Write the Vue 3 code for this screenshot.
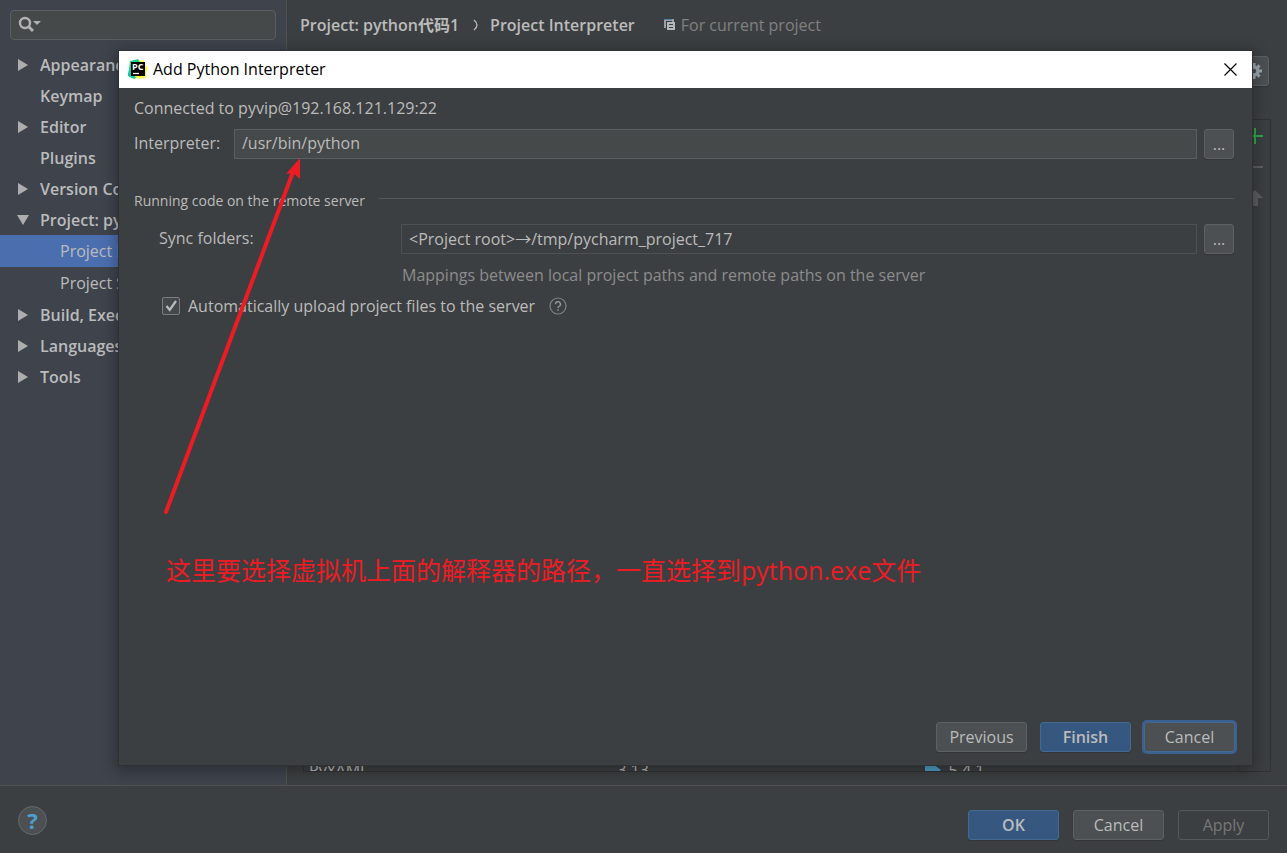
<script setup>
import { ref } from 'vue'

const search = ref('')
const interpreter = ref('/usr/bin/python')
const syncFolders = ref('<Project root>→/tmp/pycharm_project_717')
const autoUpload = ref(true)

const nav = [
  { label: 'Appearance & Behavior', arrow: 'right' },
  { label: 'Keymap' },
  { label: 'Editor', arrow: 'right' },
  { label: 'Plugins' },
  { label: 'Version Control', arrow: 'right' },
  { label: 'Project: python代码1', arrow: 'down' },
  { label: 'Project Interpreter', child: true, selected: true },
  { label: 'Project Structure', child: true },
  { label: 'Build, Execution, Deployment', arrow: 'right' },
  { label: 'Languages & Frameworks', arrow: 'right' },
  { label: 'Tools', arrow: 'right' },
]
</script>

<template>
  <div class="window">
    <div class="main">
      <aside class="sidebar">
        <label class="search">
          <svg width="24" height="18" viewBox="0 0 24 18" aria-hidden="true">
            <circle cx="7" cy="7" r="5" fill="none" stroke="#afb1b3" stroke-width="2.4" />
            <path d="M10.5 10.5L15 15" stroke="#afb1b3" stroke-width="3" />
            <path d="M15 5h8l-4 4z" fill="#afb1b3" />
          </svg>
          <input v-model="search" type="text" aria-label="Search settings" />
        </label>
        <nav>
          <a
            v-for="item in nav"
            :key="item.label"
            href="#"
            class="nav-item"
            :class="{ child: item.child, selected: item.selected }"
          >
            <svg class="arrow" width="12" height="12" viewBox="0 0 12 12" aria-hidden="true">
              <path v-if="item.arrow === 'right'" d="M1 0l10 6-10 6z" fill="#adadad" />
              <path v-if="item.arrow === 'down'" d="M0 1h12l-6 10z" fill="#adadad" />
            </svg>
            <span>{{ item.label }}</span>
          </a>
        </nav>
      </aside>

      <section class="content">
        <header class="crumbs">
          <b>Project: python代码1</b>
          <svg class="chevron" width="6" height="12" viewBox="0 0 6 12" aria-hidden="true">
            <path d="M1 1q3 2.5 3 5t-3 5" fill="none" stroke="#bbb" stroke-width="1.3" />
          </svg>
          <b>Project Interpreter</b>
          <span class="scope">
            <svg width="12" height="12" viewBox="0 0 12 12" aria-hidden="true">
              <path d="M1 9V1h8v2" fill="none" stroke="#9aa0a4" stroke-width="2" />
              <path d="M0 .5h8" stroke="#4a87a8" />
              <path d="M3 3h8v8H3z" fill="#b4b8ba" />
              <path d="M5 5.5h4M5 8.5h4" stroke="#3c3f41" />
            </svg>
            For current project
          </span>
        </header>
        <div class="toolbar">
          <button class="btn icon-btn" aria-label="Interpreter options">
            <svg width="16" height="16" viewBox="0 0 16 16" aria-hidden="true">
              <circle cx="8" cy="8" r="4" fill="none" stroke="#9aa7b0" stroke-width="3.4" />
              <path
                d="M8 0v3M8 13v3M0 8h3M13 8h3M2.4 2.4l2 2M11.6 11.6l2 2M2.4 13.6l2-2M11.6 4.4l2-2"
                stroke="#9aa7b0"
                stroke-width="3"
              />
            </svg>
          </button>
        </div>
        <div class="panel">
          <div class="table-view">
            <table>
              <tbody>
                <tr>
                  <td>PyYAML</td>
                  <td>3.13</td>
                  <td>
                    <svg width="16" height="12" viewBox="0 0 16 12" aria-hidden="true">
                      <path d="M0 1h8V0l8 6-8 6v-2H0z" fill="#4d9fc4" />
                    </svg>
                    5.4.1
                  </td>
                </tr>
              </tbody>
            </table>
          </div>
          <div class="strip">
            <button aria-label="Install">
              <svg width="16" height="16" viewBox="0 0 16 16"><path d="M8 0v16M0 8h16" stroke="#2fa84f" stroke-width="2" /></svg>
            </button>
            <button aria-label="Uninstall">
              <svg width="16" height="16" viewBox="0 0 16 16"><path d="M0 8h16" stroke="#5c5e5f" stroke-width="2" /></svg>
            </button>
            <button aria-label="Upgrade">
              <svg width="16" height="16" viewBox="0 0 16 16"><path d="M8 0l8 8h-5v8H6V8H0z" fill="#5c5e5f" /></svg>
            </button>
          </div>
        </div>
      </section>
    </div>

    <footer class="footer">
      <button class="help" aria-label="Help">?</button>
      <button class="btn primary">OK</button>
      <button class="btn">Cancel</button>
      <button class="btn disabled" disabled>Apply</button>
    </footer>

    <div class="dialog" role="dialog" aria-labelledby="dialog-title">
      <div class="titlebar">
        <svg width="20" height="20" viewBox="0 0 20 20" aria-hidden="true">
          <path d="M2 2l8-2 3 4v13l-7 3-6-3z" fill="#21d789" />
          <path d="M12 1l4 1 1 4 3 3-2 5 1 4-7 2-5-2z" fill="#fcf84a" />
          <path d="M1 11l6 8-5-1-2-2z" fill="#10c5a8" />
          <path d="M3 3h14v14H3z" fill="#000" />
          <path d="M5 14.5h6" stroke="#fff" stroke-width="1.3" />
          <text x="4" y="11" class="logo-text">PC</text>
        </svg>
        <span id="dialog-title">Add Python Interpreter</span>
        <button class="close" aria-label="Close">
          <svg width="13" height="13" viewBox="0 0 13 13"><path d="M.5.5l12 12M12.5.5l-12 12" stroke="#000" stroke-width="1.2" /></svg>
        </button>
      </div>

      <div class="body">
        <p class="connected">Connected to pyvip@192.168.121.129:22</p>
        <div class="row">
          <label class="interp-label" for="interp">Interpreter:</label>
          <input id="interp" v-model="interpreter" class="field" type="text" />
          <button class="btn icon-btn" aria-label="Browse interpreter">...</button>
        </div>
        <fieldset>
          <legend class="divider"><span>Running code on the remote server</span></legend>
          <div class="row">
            <label class="sync-label" for="sync">Sync folders:</label>
            <input id="sync" v-model="syncFolders" class="field readonly" type="text" readonly />
            <button class="btn icon-btn" aria-label="Browse folders">...</button>
          </div>
          <p class="hint">Mappings between local project paths and remote paths on the server</p>
          <div class="row check-row">
            <input id="auto" v-model="autoUpload" type="checkbox" />
            <label for="auto">Automatically upload project files to the server</label>
            <svg width="18" height="18" viewBox="0 0 18 18" aria-hidden="true">
              <circle cx="9" cy="9" r="8" fill="none" stroke="#7f8486" stroke-width="1.2" />
              <path d="M6.5 7.2a2.5 2.4 0 1 1 3.6 2.1q-1.1.5-1.1 1.7" fill="none" stroke="#8f9496" stroke-width="1.4" />
              <path d="M8.3 12.2h1.5v1.5H8.3z" fill="#8f9496" />
            </svg>
          </div>
        </fieldset>
      </div>

      <div class="actions">
        <button class="btn">Previous</button>
        <button class="btn primary">Finish</button>
        <button class="btn focused">Cancel</button>
      </div>

      <svg class="note-arrow" width="140" height="360" viewBox="0 0 140 360" aria-hidden="true">
        <path d="M3 354L130 14" stroke="#ed1c24" stroke-width="4" stroke-linecap="round" />
        <path d="M137 0L123 16l7-1 7 6z" fill="#ed1c24" />
      </svg>
      <p class="note">这里要选择虚拟机上面的解释器的路径，一直选择到python.exe文件</p>
    </div>
  </div>
</template>

<style>
body {
  background: #3c3f41;
}
</style>

<style scoped>
.window,
.window * {
  box-sizing: border-box;
}
.window {
  position: relative;
  display: flex;
  flex-direction: column;
  min-height: 100vh;
  overflow: hidden;
  background: #3c3f41;
  color: #bbb;
  font: 16px/24px "Open Sans", "Noto Sans CJK SC", sans-serif;
}
button,
input {
  font: inherit;
  color: inherit;
}
b {
  font-weight: 600;
}
p {
  margin: 0;
}
.main {
  flex: 1;
  display: flex;
}
.sidebar {
  flex: none;
  width: 287px;
  padding-top: 10px;
  background: #3e434c;
  border-right: 1px solid #515151;
}
.search {
  display: flex;
  align-items: center;
  height: 30px;
  margin: 0 10px 9px;
  padding-left: 7px;
  background: #45494a;
  border: 1px solid #5b5e60;
  border-radius: 4px;
}
.search input {
  flex: 1;
  min-width: 0;
  background: none;
  border: 0;
  outline: 0;
}
.nav-item {
  display: flex;
  align-items: center;
  gap: 11px;
  height: 31px;
  padding-left: 17px;
  color: #bbb;
  font-weight: 600;
  text-decoration: none;
  white-space: nowrap;
}
.nav-item.child {
  height: 32px;
  padding-left: 37px;
  font-weight: 400;
}
.nav-item.selected {
  background: #4b6eaf;
}
.content {
  flex: 1;
  min-width: 0;
  display: flex;
  flex-direction: column;
  padding: 0 16px 13px;
}
.crumbs {
  display: flex;
  align-items: center;
  height: 50px;
  margin-left: -3px;
}
.chevron {
  margin: 0 11px 0 14px;
}
.scope {
  display: flex;
  align-items: center;
  gap: 5px;
  margin-left: 29px;
  color: #808080;
}
.toolbar {
  display: flex;
  justify-content: flex-end;
  padding: 6px 2px 33px 0;
}
.panel {
  flex: 1;
  display: flex;
  border: 1px solid #323232;
}
.table-view {
  flex: 1;
  display: flex;
  flex-direction: column;
  justify-content: flex-end;
  overflow: hidden;
  border-right: 1px solid #323232;
}
table {
  width: 100%;
  margin-bottom: -14px;
  border-collapse: collapse;
  table-layout: fixed;
}
td {
  width: 33%;
  height: 30px;
  padding: 0 0 0 5px;
}
td:last-child {
  width: 34%;
}
td svg {
  margin-right: 3px;
}
.strip {
  width: 31px;
  display: flex;
  flex-direction: column;
}
.strip button {
  display: grid;
  place-items: center;
  height: 31px;
  padding: 0;
  background: none;
  border: 0;
}
.btn {
  flex: none;
  width: 91px;
  height: 30px;
  padding: 0 0 1px;
  background: #4c5052;
  border: 1px solid #5e6162;
  border-radius: 3px;
  box-shadow: 0 1px 1px #333537;
  line-height: 26px;
  text-align: center;
}
.icon-btn {
  display: grid;
  place-items: center;
  width: 30px;
}
.btn.primary {
  background: #365880;
  border-color: #426a92;
  font-weight: 600;
}
.btn.disabled {
  background: none;
  box-shadow: none;
  border-color: #55585a;
  color: #777;
}
.btn.focused {
  border-color: #43688f;
  box-shadow: 0 0 0 2px #3a6190;
}
.footer {
  display: flex;
  align-items: center;
  gap: 14px;
  height: 68px;
  padding: 11px 18px 0;
  border-top: 1px solid #515151;
}
.help {
  width: 29px;
  height: 29px;
  margin: 0 auto 10px 0;
  padding: 0;
  background: #4c5052;
  border: 1px solid #65696b;
  border-radius: 50%;
  color: #4ba0d0;
  font-size: 22px;
  font-weight: 700;
}
.dialog {
  position: absolute;
  inset: 51px 35px 88px 119px;
  display: flex;
  flex-direction: column;
  background: #3c3f41;
  box-shadow: 0 0 0 1px #2f3132, 0 3px 14px 2px rgba(0, 0, 0, 0.35);
}
.titlebar {
  display: flex;
  align-items: center;
  gap: 5px;
  height: 37px;
  padding: 0 15px 1px 9px;
  background: #fff;
  color: #000;
}
.logo-text {
  fill: #fff;
  font: 700 9px "Open Sans", sans-serif;
}
.close {
  display: grid;
  margin-left: auto;
  padding: 0;
  background: none;
  border: 0;
}
.body {
  flex: 1;
  padding: 8px 18px 0 15px;
}
.row {
  display: flex;
  align-items: center;
}
.connected {
  margin-bottom: 9px;
}
.interp-label {
  width: 100px;
  padding-bottom: 2px;
}
.field {
  flex: 1;
  min-width: 0;
  height: 30px;
  margin-right: 7px;
  padding: 0 8px 2px 7px;
  background: #45494a;
  border: 1px solid #5b5e60;
  outline: 0;
}
.field.readonly {
  background: none;
  border-color: #4e5153;
}
fieldset {
  min-width: 0;
  margin: 30px 0 0;
  padding: 0;
  border: 0;
}
.divider {
  display: flex;
  align-items: center;
  gap: 14px;
  width: 100%;
  padding: 0;
  margin-bottom: 11px;
  font-size: 14px;
}
.divider::after {
  content: "";
  flex: 1;
  height: 1px;
  margin-bottom: 5px;
  background: #555859;
}
.sync-label {
  width: 267px;
  padding: 0 0 2px 25px;
}
.hint {
  margin: 9px 0 7px 268px;
  color: #8c8c8c;
}
.check-row {
  padding-left: 28px;
}
.check-row input {
  appearance: none;
  width: 18px;
  height: 18px;
  margin: 0 8px 0 0;
  background: #43494a;
  border: 1px solid #7a7d7e;
  border-radius: 2px;
}
.check-row input:checked {
  background-image: url("data:image/svg+xml,%3Csvg xmlns='http://www.w3.org/2000/svg' viewBox='0 0 16 16'%3E%3Cpath d='M3.5 8l3.2 4L13 3' fill='none' stroke='%23bbb' stroke-width='2.2'/%3E%3C/svg%3E");
}
.check-row svg {
  margin-left: 14px;
}
.actions {
  display: flex;
  justify-content: flex-end;
  gap: 13px;
  padding: 0 17px 13px;
}
.note-arrow {
  position: absolute;
  left: 44px;
  top: 107px;
}
.note {
  position: absolute;
  left: 47px;
  top: 501px;
  color: #ed1c24;
  font-size: 25px;
  line-height: 36px;
  white-space: nowrap;
}
</style>
